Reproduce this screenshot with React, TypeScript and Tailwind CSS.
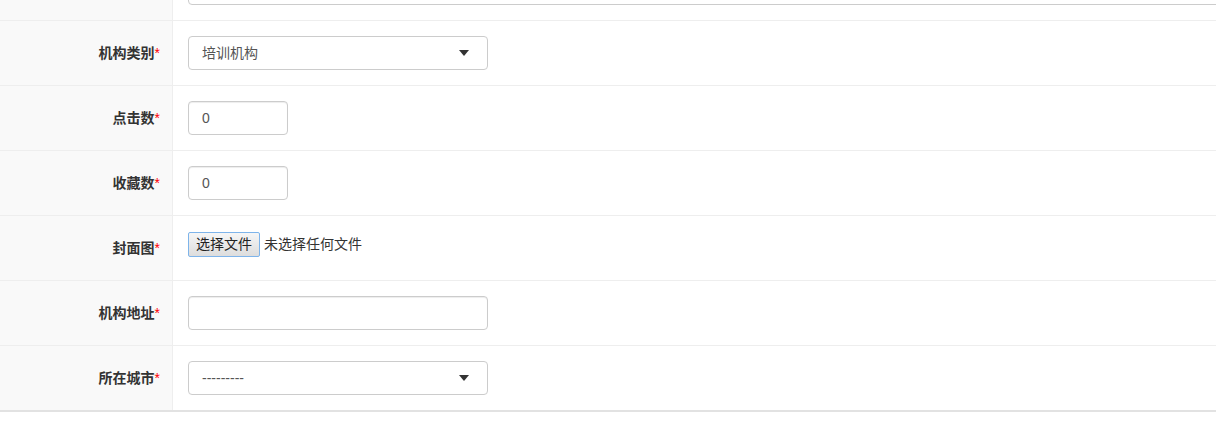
import React from 'react';

const FONT = '"Liberation Sans", "Noto Sans CJK SC", sans-serif';

function Caret() {
  return (
    <svg width="10" height="6" viewBox="0 0 10 6" className="text-[#333]">
      <path d="M0 0h10L5 6z" fill="currentColor" />
    </svg>
  );
}

function Label({ text }: { text: string }) {
  return (
    <span className="text-[14px] font-bold text-[#333]">
      {text}
      <span className="font-normal text-[#ff0000]">*</span>
    </span>
  );
}

function FormRow({ label, children }: { label?: string; children: React.ReactNode }) {
  return (
    <div className="flex h-[65px] border-b border-[#eeeeee]">
      <div className="flex w-[173px] shrink-0 items-center justify-end border-r border-[#eeeeee] bg-[#f9f9f9] pr-[12px]">
        {label && <Label text={label} />}
      </div>
      <div className="flex flex-1 items-center pl-[15px]">{children}</div>
    </div>
  );
}

function SelectBox({ value }: { value: string }) {
  return (
    <div className="flex h-[34px] w-[300px] items-center justify-between rounded-[4px] border border-[#cccccc] bg-white pl-[13px] pr-[18px] text-[14px] text-[#555]">
      <span>{value}</span>
      <Caret />
    </div>
  );
}

function TextBox({ value = '', width }: { value?: string; width: string }) {
  return (
    <div className={`flex h-[34px] ${width} items-center rounded-[4px] border border-[#cccccc] bg-white pl-[13px] text-[14px] text-[#555] shadow-[inset_0_1px_1px_rgba(0,0,0,0.075)]`}>
      {value}
    </div>
  );
}

export default function App() {
  return (
    <div className="h-[421px] w-[1216px] overflow-hidden bg-white" style={{ fontFamily: FONT }}>
      <div className="-mt-[44px]">
        <FormRow>
          <div className="h-[34px] w-[1100px] rounded-[4px] border border-[#cccccc]" />
        </FormRow>
        <FormRow label="机构类别">
          <SelectBox value="培训机构" />
        </FormRow>
        <FormRow label="点击数">
          <TextBox value="0" width="w-[100px]" />
        </FormRow>
        <FormRow label="收藏数">
          <TextBox value="0" width="w-[100px]" />
        </FormRow>
        <FormRow label="封面图">
          <div className="mb-[8px] flex items-center gap-[4px] text-[14px] text-[#333]">
            <button className="h-[25px] rounded-[2px] border border-[#7eb4ea] bg-gradient-to-b from-[#f6f6f6] to-[#dddddd] px-[7px] text-[14px] text-[#222]">
              选择文件
            </button>
            <span>未选择任何文件</span>
          </div>
        </FormRow>
        <FormRow label="机构地址">
          <TextBox width="w-[300px]" />
        </FormRow>
        <div className="border-b-2 border-[#e2e2e2]">
          <div className="flex h-[64px]">
            <div className="flex w-[173px] shrink-0 items-center justify-end border-r border-[#eeeeee] bg-[#f9f9f9] pr-[12px]">
              <Label text="所在城市" />
            </div>
            <div className="flex flex-1 items-center pl-[15px]">
              <SelectBox value="---------" />
            </div>
          </div>
        </div>
      </div>
    </div>
  );
}
